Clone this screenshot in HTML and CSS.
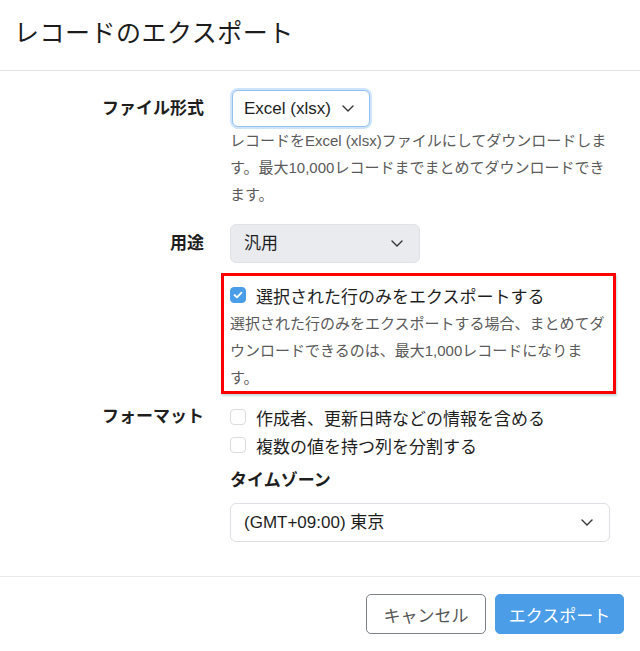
FILE: index.html
```html
<!DOCTYPE html>
<html lang="ja">
<head>
<meta charset="utf-8">
<title>レコードのエクスポート</title>
<link rel="stylesheet" href="styles.css">
</head>
<body>
<div class="dialog">
  <header class="dlg-header">
    <h1 class="dlg-title">レコードのエクスポート</h1>
  </header>
  <main class="dlg-body">
    <div class="row">
      <div class="label label-select">ファイル形式</div>
      <div class="field">
        <div class="select select-focus">
          <span class="select-text">Excel (xlsx)</span>
          <svg class="chev" width="12" height="7" viewBox="0 0 12 7"><path d="M1 1l5 5 5-5" fill="none" stroke="#333" stroke-width="1.4" stroke-linecap="round" stroke-linejoin="round"/></svg>
        </div>
        <p class="help">レコードをExcel (xlsx)ファイルにしてダウンロードします。最大10,000レコードまでまとめてダウンロードできます。</p>
      </div>
    </div>

    <div class="row row-use">
      <div class="label label-select">用途</div>
      <div class="field">
        <div class="select select-gray">
          <span class="select-text">汎用</span>
          <svg class="chev" width="12" height="7" viewBox="0 0 12 7"><path d="M1 1l5 5 5-5" fill="none" stroke="#333" stroke-width="1.4" stroke-linecap="round" stroke-linejoin="round"/></svg>
        </div>
        <div class="highlight">
          <label class="check">
            <span class="box box-on"><svg width="10" height="8" viewBox="0 0 10 8"><path d="M1.5 4l2.5 2.4L8.5 1.6" fill="none" stroke="#fff" stroke-width="1.8" stroke-linecap="round" stroke-linejoin="round"/></svg></span>
            <span class="check-text">選択された行のみをエクスポートする</span>
          </label>
          <p class="help help-inbox">選択された行のみをエクスポートする場合、まとめてダウンロードできるのは、最大1,000レコードになります。</p>
        </div>
      </div>
    </div>

    <div class="row row-format">
      <div class="label label-check">フォーマット</div>
      <div class="field">
        <label class="check">
          <span class="box"></span>
          <span class="check-text">作成者、更新日時などの情報を含める</span>
        </label>
        <label class="check">
          <span class="box"></span>
          <span class="check-text">複数の値を持つ列を分割する</span>
        </label>
        <div class="sublabel">タイムゾーン</div>
        <div class="select select-wide">
          <span class="select-text">(GMT+09:00) 東京</span>
          <svg class="chev" width="12" height="7" viewBox="0 0 12 7"><path d="M1 1l5 5 5-5" fill="none" stroke="#333" stroke-width="1.4" stroke-linecap="round" stroke-linejoin="round"/></svg>
        </div>
      </div>
    </div>
  </main>
  <footer class="dlg-footer">
    <button class="btn btn-cancel" type="button">キャンセル</button>
    <button class="btn btn-primary" type="button">エクスポート</button>
  </footer>
</div>
</body>
</html>
```

FILE: styles.css
```css
* { box-sizing: border-box; }
html, body {
  margin: 0;
  padding: 0;
  background: #fff;
}
body {
  font-family: "Liberation Sans", "Noto Sans CJK JP", sans-serif;
  color: #222;
  width: 640px;
  height: 651px;
  overflow: hidden;
}
.dialog {
  display: flex;
  flex-direction: column;
}
.dlg-header {
  height: 71px;
  border-bottom: 1px solid #e4e4e4;
  padding: 16px 0 0 14px;
}
.dlg-title {
  margin: 0;
  font-size: 25px;
  font-weight: 400;
  line-height: 34px;
  letter-spacing: 0.5px;
  color: #1c1c1c;
}
.dlg-body {
  padding: 18px 30px 34px 0;
  border-bottom: 1px solid #e8e8e8;
}
.row {
  display: grid;
  grid-template-columns: 204px 380px;
  column-gap: 26px;
}
.label {
  text-align: right;
  font-weight: 700;
  font-size: 17px;
  color: #1e1e1e;
}
.label-select {
  line-height: 40px;
}
.label-check {
  line-height: 28px;
}
.field {
  display: flex;
  flex-direction: column;
  align-items: flex-start;
}
.select {
  display: flex;
  align-items: center;
  justify-content: space-between;
  height: 40px;
  padding: 0 16px 0 13px;
  border: 1px solid #dcdfe3;
  border-radius: 6px;
  background: #fff;
  font-size: 17px;
  color: #1e1e1e;
  white-space: nowrap;
}
.select-text {
  line-height: 1;
  white-space: nowrap;
}
.chev {
  flex: none;
}
.select-focus {
  width: 138px;
  height: 37px;
  margin: 1px 0 0 2px;
  padding: 0 15px 0 11px;
  border-color: #93c2f2;
  box-shadow: 0 0 0 2px #cfe4fb;
}
.select-gray {
  width: 190px;
  height: 39px;
  background: #e9ebee;
  border-color: #dfe2e6;
}
.select-wide {
  width: 380px;
  height: 39px;
  margin-top: 8px;
}
.help {
  margin: 0;
  font-size: 15px;
  line-height: 27px;
  color: #5a5a5a;
  width: 380px;
}
.row-use {
  margin-top: 16px;
}
.highlight {
  margin: 10px 0 0 -9px;
  width: 395px;
  border: 3px solid #f00;
  padding: 5px 4px 0 6px;
  box-shadow: 1px 2px 2px rgba(60, 140, 140, 0.3);
}
.help-inbox {
  width: 380px;
  margin-top: 1px;
}
.check {
  display: flex;
  align-items: center;
  gap: 10px;
  height: 28px;
  font-size: 17px;
  color: #1e1e1e;
}
.box {
  width: 16px;
  height: 16px;
  border: 1px solid #dcdcdc;
  border-radius: 4px;
  background: #fff;
  display: flex;
  align-items: center;
  justify-content: center;
  flex: none;
}
.box-on {
  background: #4a9de8;
  border-color: #4a9de8;
}
.row-format {
  margin-top: 9px;
}
.sublabel {
  margin-top: 8px;
  font-weight: 700;
  font-size: 17px;
  line-height: 28px;
  color: #1e1e1e;
}
.dlg-footer {
  display: flex;
  justify-content: flex-end;
  gap: 9px;
  padding: 17px 16px 0 0;
}
.btn {
  height: 40px;
  border-radius: 5px;
  font-family: inherit;
  font-size: 17px;
  padding: 0;
  cursor: pointer;
}
.btn-cancel {
  width: 120px;
  background: #fff;
  border: 1px solid #7c8188;
  color: #555;
}
.btn-primary {
  width: 129px;
  background: #4a9de6;
  border: 1px solid #4a9de6;
  color: #fff;
}
```
